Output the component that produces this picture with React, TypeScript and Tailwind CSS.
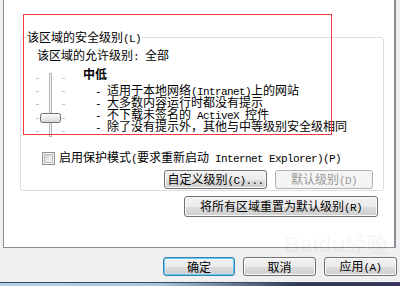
import React from "react";

const ASCII = /^[\x20-\x7E]+$/;

function Mixed({ text }: { text: string }) {
  const parts = text.split(/([\x20-\x7E]+)/).filter((p) => p.length > 0);
  return (
    <>
      {parts.map((p, i) =>
        ASCII.test(p) ? (
          <span key={i} className="font-['Liberation_Mono',monospace] text-[11px] tracking-[-0.6px] whitespace-pre">
            {p}
          </span>
        ) : (
          <span key={i}>{p}</span>
        )
      )}
    </>
  );
}

type BtnProps = { text: string; w: string; h: string; kind?: "normal" | "disabled" | "focus" };

function Btn({ text, w, h, kind = "normal" }: BtnProps) {
  const base =
    "flex items-center justify-center rounded-[3px] border text-[12px] leading-[12px] box-border shrink-0";
  let cls = "";
  if (kind === "disabled") {
    cls = "border-[#adb2b5] bg-[#f4f4f4] text-[#9a9a9a]";
  } else if (kind === "focus") {
    cls =
      "border-[#3c7fb1] text-black bg-[linear-gradient(#f2f2f2_0%,#ebebeb_50%,#dddddd_50%,#cfcfcf_100%)] shadow-[inset_0_0_0_1px_#62cdf4]";
  } else {
    cls =
      "border-[#707070] text-black bg-[linear-gradient(#f2f2f2_0%,#ebebeb_50%,#dddddd_50%,#cfcfcf_100%)] shadow-[inset_0_0_0_1px_#fbfbfb]";
  }
  return (
    <div className={`${base} ${cls} ${w} ${h}`}>
      <span className="whitespace-pre">
        <Mixed text={text} />
      </span>
    </div>
  );
}

function Slider() {
  const ticks = [11, 24, 37, 51, 64];
  return (
    <svg width="31" height="70" viewBox="0 0 31 70" className="shrink-0 block">
      <defs>
        <linearGradient id="thumb" x1="0" y1="0" x2="0" y2="1">
          <stop offset="0" stopColor="#fdfdfd" />
          <stop offset="0.5" stopColor="#ececec" />
          <stop offset="1" stopColor="#d2d2d2" />
        </linearGradient>
      </defs>
      <rect x="14.5" y="6.5" width="2" height="63" fill="#f2f2f2" stroke="#b8b8b8" />
      {ticks.map((t) => (
        <g key={t}>
          <line x1="1" y1={t + 0.5} x2="4" y2={t + 0.5} stroke="#c4c4c4" />
          <line x1="27" y1={t + 0.5} x2="30" y2={t + 0.5} stroke="#c4c4c4" />
        </g>
      ))}
      <rect x="5.5" y="46.5" width="20" height="9" rx="2" fill="url(#thumb)" stroke="#707070" />
    </svg>
  );
}

export default function App() {
  return (
    <div className="relative w-[400px] h-[286px] overflow-hidden bg-[#f0f0f0] text-[12px] leading-[12px] text-black font-['Noto_Sans_CJK_SC','Noto_Sans',sans-serif]">
      {/* tab panel */}
      <div className="ml-[3px] w-[393px] h-[248px] bg-white border-l border-b border-r-2 border-[#898c95] box-border flex flex-col">
        {/* group box */}
        <div className="relative ml-[16px] mt-[37px] w-[364px] h-[154px] box-border border border-[#d5dfe5] rounded-[3px] flex flex-col">
          <span className="absolute left-[5px] top-[-7px] bg-white px-[1px] whitespace-pre">
            <Mixed text="该区域的安全级别(L)" />
          </span>
          <div className="ml-[16px] mt-[11px] whitespace-pre">
            <Mixed text="该区域的允许级别: 全部" />
          </div>
          <div className="flex mt-[4px] ml-[14px]">
            <Slider />
            <div className="ml-[17px] flex flex-col">
              <div className="mt-[1px] font-bold">中低</div>
              <div className="mt-[4px] flex flex-col">
                {[
                  "适用于本地网络(Intranet)上的网站",
                  "大多数内容运行时都没有提示",
                  "不下载未签名的 ActiveX 控件",
                  "除了没有提示外，其他与中等级别安全级相同",
                ].map((t) => (
                  <div key={t} className="h-[12px] whitespace-pre">
                    <Mixed text={"  - " + t} />
                  </div>
                ))}
              </div>
            </div>
          </div>
          <div className="flex items-center mt-[14px] ml-[21px]">
            <div className="w-[13px] h-[13px] box-border border border-[#8f8f8f] bg-[#f4f4f4] flex items-center justify-center shrink-0">
              <div className="w-[9px] h-[9px] box-border border border-[#b8bcc2] bg-[linear-gradient(135deg,#cdcfd3_0%,#e8e8ea_60%,#f8f8f8_100%)]" />
            </div>
            <div className="ml-[4px] whitespace-pre">
              <Mixed text="启用保护模式(要求重新启动 Internet Explorer)(P)" />
            </div>
          </div>
          <div className="flex justify-end gap-[8px] mt-[5px] mr-[10px]">
            <Btn text="自定义级别(C)..." w="w-[103px]" h="h-[19px]" />
            <Btn text="默认级别(D)" w="w-[98px]" h="h-[19px]" kind="disabled" />
          </div>
        </div>
        <div className="flex justify-end mt-[5px] mr-[16px]">
          <Btn text="将所有区域重置为默认级别(R)" w="w-[194px]" h="h-[21px]" />
        </div>
      </div>

      {/* dialog buttons */}
      <div className="flex ml-[163px] mt-[9px] gap-[8px]">
        <Btn text="确定" w="w-[72px]" h="h-[19px]" kind="focus" />
        <Btn text="取消" w="w-[73px]" h="h-[19px]" />
        <Btn text="应用(A)" w="w-[73px]" h="h-[19px]" />
      </div>

      {/* bottom taskbar edge */}
      <div className="mt-[6px] h-[1px] bg-[#3d4a5c]" />
      <div className="h-[3px] bg-[linear-gradient(90deg,#b4d3ec_0%,#a6c6e2_40%,#2c3554_75%,#3a3260_100%)]" />

      {/* red annotation box */}
      <div className="absolute left-[23px] top-[14px] w-[309px] h-[121px] border border-[#ef3b3b] pointer-events-none" />

      {/* faint watermark */}
      <div className="absolute left-[284px] top-[234px] text-[22px] leading-[22px] font-bold text-black/[0.05] font-['Liberation_Sans',sans-serif] pointer-events-none">
        Baidu经验
      </div>
    </div>
  );
}
